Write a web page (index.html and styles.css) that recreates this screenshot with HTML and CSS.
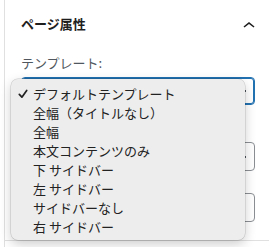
FILE: index.html
```html
<!DOCTYPE html>
<html lang="ja">
<head>
<meta charset="utf-8">
<link rel="stylesheet" href="styles.css">
</head>
<body>
<div class="page">
  <div class="sidebar">
    <section class="panel">
      <div class="panel-header">
        <h2 class="panel-title">ページ属性</h2>
        <svg class="chevron" width="24" height="24" viewBox="0 0 24 24"><path d="M6.5 12.4L12 8l5.5 4.4-.9 1.2L12 10l-4.5 3.6-1-1.2z"/></svg>
      </div>
      <div class="panel-body">
        <div class="field">
          <label class="field-label">テンプレート:</label>
          <div class="select is-focused"><span class="arrow"></span></div>
        </div>
        <div class="field field-parent">
          <div class="select"><span class="arrow"></span></div>
        </div>
        <div class="field field-order">
          <div class="select"></div>
        </div>
      </div>
    </section>
  </div>
  <ul class="menu">
    <li class="menu-item is-checked"><svg class="check" width="10" height="10" viewBox="0 0 10 10"><path d="M1.3 5.4L3.9 8.2L8.7 1.4"/></svg>デフォルトテンプレート</li>
    <li class="menu-item">全幅（タイトルなし）</li>
    <li class="menu-item">全幅</li>
    <li class="menu-item">本文コンテンツのみ</li>
    <li class="menu-item">下 サイドバー</li>
    <li class="menu-item">左 サイドバー</li>
    <li class="menu-item">サイドバーなし</li>
    <li class="menu-item">右 サイドバー</li>
  </ul>
</div>
</body>
</html>
```
FILE: styles.css
```css
* { box-sizing: border-box; }
html, body { margin: 0; padding: 0; background: #fff; }
body {
  width: 269px;
  height: 247px;
  overflow: hidden;
  font-family: "Noto Sans CJK JP", "Noto Sans", sans-serif;
  color: #1e1e1e;
}
.page { position: relative; height: 247px; }
.sidebar {
  margin-left: 4px;
  border-left: 1px solid #e0e0e0;
  height: 247px;
}
.panel {
  height: 241px;
  border-bottom: 1px solid #e0e0e0;
}
.panel-header {
  height: 48px;
  display: flex;
  align-items: center;
  justify-content: space-between;
  padding: 0 8px 0 16px;
}
.panel-title {
  margin: 0;
  font-size: 13px;
  font-weight: 700;
  line-height: 20px;
  color: #1e1e1e;
}
.chevron { fill: #1e1e1e; margin-top: 3px; }
.panel-body {
  padding: 7px 14px 0 16px;
}
.field-label {
  display: block;
  font-size: 13px;
  line-height: 16px;
  color: #50575e;
  margin-bottom: 6px;
}
.select {
  height: 28px;
  border: 1px solid #8c8f94;
  border-radius: 4px;
  display: flex;
  align-items: center;
  justify-content: flex-end;
  padding: 0 8px;
}
.select.is-focused {
  border-color: #2271b1;
  box-shadow: inset 0 0 0 1px #2271b1;
}
.arrow {
  width: 2px;
  height: 2px;
  background: #50575e;
}
.field-parent { margin-top: 37px; }
.field-parent .select { height: 29px; }
.field-order { margin-top: 22px; }
.field-order .select { height: 29px; }

.menu {
  position: absolute;
  left: 11px;
  top: 79px;
  width: 234px;
  margin: 0;
  padding: 5px 0 4px;
  list-style: none;
  background: #ededed;
  border-radius: 7px;
  box-shadow: 0 0 0 0.5px rgba(0,0,0,0.18), 0 4px 12px rgba(0,0,0,0.2);
}
.menu-item {
  position: relative;
  height: 19px;
  line-height: 19px;
  padding-left: 22px;
  font-size: 13px;
  color: #222;
  white-space: nowrap;
}
.check {
  position: absolute;
  left: 7px;
  top: 5px;
  fill: none;
  stroke: #222;
  stroke-width: 1.7;
  stroke-linecap: round;
  stroke-linejoin: round;
}
```
